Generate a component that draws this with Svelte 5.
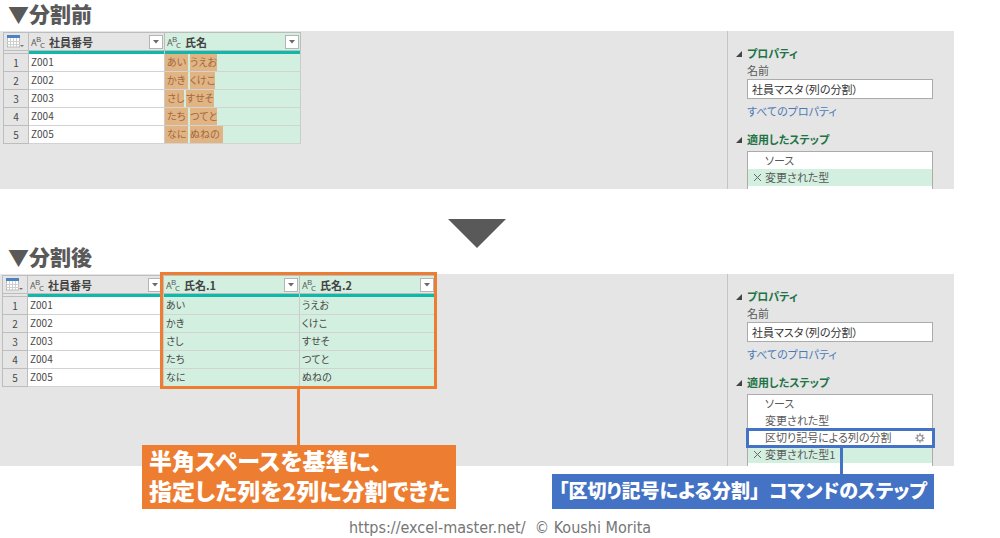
<script lang="ts">
	type Step = { label: string; active?: boolean; gear?: boolean };

	const ids = ['Z001', 'Z002', 'Z003', 'Z004', 'Z005'];
	const first = ['あい', 'かき', 'さし', 'たち', 'なに'];
	const last = ['うえお', 'くけこ', 'すせそ', 'つてと', 'ぬねの'];

	const stepsBefore: Step[] = [{ label: 'ソース' }, { label: '変更された型', active: true }];
	const stepsAfter: Step[] = [
		{ label: 'ソース' },
		{ label: '変更された型' },
		{ label: '区切り記号による列の分割', gear: true },
		{ label: '変更された型1', active: true }
	];
</script>

{#snippet corner()}
	<th class="corner" scope="col" aria-label="テーブル">
		<svg width="18" height="14" viewBox="0 0 18 14">
			<rect x="0.5" y="1" width="12" height="11" fill="#fff" stroke="#bcbcbc" />
			<path d="M3.5 3v9M6.5 3v9M9.5 3v9M0 6.5h13M0 9.5h13" stroke="#cfcfcf" fill="none" />
			<rect width="13" height="3" fill="#4a83c3" />
			<path d="M13 10h4l-2 2z" fill="#777" />
		</svg>
	</th>
{/snippet}

{#snippet column(name: string, selected: boolean)}
	<th scope="col" class:selected>
		<div class="head">
			<svg class="abc" width="14" height="14" viewBox="0 0 14 14">
				<text x="0" y="11" font-size="9">A</text>
				<text x="5" y="7" font-size="8">B</text>
				<text x="9" y="13" font-size="8">C</text>
			</svg>
			<span>{name}</span>
			<button class="filter" aria-label="{name}のフィルター">
				<svg width="6" height="4" viewBox="0 0 6 4"><path d="M0 0h6L3 3.5z" fill="#6b6b6b" /></svg>
			</button>
		</div>
	</th>
{/snippet}

{#snippet settings(id: string, steps: Step[])}
	<aside>
		<h3><svg width="6" height="6"><path d="M6 0v6H0z" fill="#444" /></svg>プロパティ</h3>
		<div class="group">
			<label for={id}>名前</label>
			<input {id} type="text" value="社員マスタ（列の分割）" />
			<a href="#all">すべてのプロパティ</a>
		</div>
		<h3><svg width="6" height="6"><path d="M6 0v6H0z" fill="#444" /></svg>適用したステップ</h3>
		<ul class="steps">
			{#each steps as step}
				<li class:active={step.active} class:marked={step.gear}>
					<svg class="remove" width="9" height="9" viewBox="0 0 9 9">
						{#if step.active}
							<path d="M1 1l7 7M8 1L1 8" stroke="#666" fill="none" />
						{/if}
					</svg>
					<span>{step.label}</span>
					{#if step.gear}
						<button class="gear" aria-label="設定">
							<svg width="10" height="10" viewBox="0 0 10 10" fill="none" stroke="#999">
								<circle cx="5" cy="5" r="2.7" stroke-width="1.3" />
								<path
									stroke-width="1.5"
									d="M5 0.3v1.9M5 7.8v1.9M0.3 5h1.9M7.8 5h1.9M1.7 1.7l1.3 1.3M7 7l1.3 1.3M8.3 1.7L7 3M3 7L1.7 8.3"
								/>
							</svg>
						</button>
					{/if}
				</li>
			{/each}
		</ul>
	</aside>
{/snippet}

<main>
	<h2>▼分割前</h2>
	<section class="panel">
		<div class="grid before">
			<table>
				<thead>
					<tr>
						{@render corner()}
						{@render column('社員番号', false)}
						{@render column('氏名', true)}
					</tr>
					<tr class="bar"><td></td><td></td><td></td></tr>
				</thead>
				<tbody>
					{#each ids as id, i}
						<tr>
							<th scope="row">{i + 1}</th>
							<td>{id}</td>
							<td class="selected names">
								<div>
									<mark class:short={first[i] === 'さし'}>{first[i]}</mark>
									<mark class="last" class:wide={last[i] === 'ぬねの'}>{last[i]}</mark>
								</div>
							</td>
						</tr>
					{/each}
				</tbody>
			</table>
		</div>
		{@render settings('name-before', stepsBefore)}
	</section>

	<svg class="arrow" width="58" height="29" viewBox="0 0 58 29">
		<path d="M0 0h58L29 29z" fill="#595959" />
	</svg>

	<h2>▼分割後</h2>
	<section class="panel">
		<div class="grid after">
			<table>
				<thead>
					<tr>
						{@render corner()}
						{@render column('社員番号', false)}
						{@render column('氏名.1', true)}
						{@render column('氏名.2', true)}
					</tr>
					<tr class="bar"><td></td><td></td><td></td><td></td></tr>
				</thead>
				<tbody>
					{#each ids as id, i}
						<tr>
							<th scope="row">{i + 1}</th>
							<td>{id}</td>
							<td class="selected">{first[i]}</td>
							<td class="selected">{last[i]}</td>
						</tr>
					{/each}
				</tbody>
			</table>
			<div class="frame"></div>
		</div>
		{@render settings('name-after', stepsAfter)}
		<p class="callout orange">半角スペースを基準に、<br />指定した列を2列に分割できた</p>
		<p class="callout blue">
			「区切り記号による分割<span class="full">」</span>コマンドのステップ
		</p>
	</section>
</main>

<footer>https://excel-master.net/&nbsp; © Koushi Morita</footer>

<style>
	:global(body) {
		margin: 0;
		background: #fff;
		font-family: 'Noto Sans CJK JP', sans-serif;
	}

	main {
		padding: 3px 46px 0 0;
	}

	h2 {
		margin: 0 0 8px 8px;
		font-size: 21px;
		line-height: 20px;
		font-weight: 900;
		color: #595959;
	}

	button {
		padding: 0;
		border: none;
		background: none;
	}

	.arrow {
		display: block;
		margin: 30px auto -2px;
	}

	.panel {
		position: relative;
		display: flex;
		justify-content: space-between;
		align-items: stretch;
		background: #e5e5e5;
	}

	.grid {
		position: relative;
		align-self: flex-start;
		padding-top: 1px;
	}

	.before {
		padding-left: 3px;
	}

	.after {
		padding-left: 2px;
	}

	/* data grid */

	table {
		border-collapse: separate;
		border-spacing: 0;
		border-left: 1px solid #bdbdbd;
		border-top: 1px solid #bdbdbd;
		font-size: 10px;
		line-height: 16px;
		color: #484848;
	}

	th,
	td {
		box-sizing: border-box;
		width: 136px;
		height: 18px;
		padding: 0 0 1px 2px;
		border-right: 1px solid #cbcbcb;
		border-bottom: 1px solid #d3d3d3;
		background: #fff;
		text-align: left;
		font-feature-settings: 'palt';
	}

	thead th {
		padding-bottom: 0;
		background: #e5e5e5;
		border-color: #bdbdbd;
		font-size: 11px;
	}

	tbody th,
	thead .corner,
	.bar td:first-child {
		width: 25px;
		padding: 0;
		background: #e5e5e5;
		border-color: #bdbdbd;
		text-align: center;
		font-weight: 400;
	}

	thead .corner {
		padding-left: 3px;
	}

	.corner svg {
		display: block;
	}

	th.selected,
	td.selected {
		background: #d3efe0;
	}

	.bar td {
		height: 3px;
		padding: 0;
		border-bottom: none;
		background: #0fb9a9;
	}

	.bar td:first-child {
		border-bottom: 1px solid #bdbdbd;
	}

	.head {
		display: flex;
		align-items: center;
		gap: 4px;
		height: 17px;
		padding-right: 1px;
		color: #444;
	}

	.abc {
		flex: none;
		fill: #555;
		font-weight: 400;
		font-family: 'Open Sans', sans-serif;
	}

	.filter {
		display: flex;
		align-items: center;
		justify-content: center;
		width: 14px;
		height: 14px;
		margin-left: auto;
		border: 1px solid #b5b5b5;
		background: #fff;
	}

	td.names {
		padding: 0;
	}

	.names div {
		display: flex;
		gap: 2px;
		height: 17px;
	}

	mark {
		box-sizing: border-box;
		width: 23px;
		padding-left: 2px;
		background: #e1b484;
		color: #a2683e;
		white-space: nowrap;
	}

	mark.short {
		width: 19px;
	}

	mark.last {
		flex: none;
		width: auto;
		min-width: 24px;
		padding-left: 0;
	}

	mark.wide {
		width: 33px;
	}

	.frame {
		position: absolute;
		top: -2px;
		right: -1px;
		bottom: -2px;
		width: 271px;
		border: 3px solid #ed7d31;
	}

	.frame::after {
		content: '';
		position: absolute;
		top: 100%;
		left: calc(50% - 2px);
		width: 3px;
		height: 60px;
		background: #ed7d31;
	}

	/* query settings */

	aside {
		box-sizing: border-box;
		width: 227px;
		padding: 14px 21px 0 8px;
		border-left: 1px solid #c4c4c4;
		font-size: 11px;
		line-height: 17px;
		color: #595959;
		font-feature-settings: 'palt';
	}

	h3 {
		display: flex;
		align-items: center;
		gap: 5px;
		margin: 0;
		font-size: 11px;
		line-height: 17px;
		color: #217346;
	}

	.group {
		display: flex;
		flex-direction: column;
		align-items: flex-start;
		padding: 0 0 11px 11px;
	}

	input {
		box-sizing: border-box;
		width: 100%;
		height: 20px;
		margin-bottom: 4px;
		padding: 0 4px;
		border: 1px solid #ababab;
		background: #fff;
		font: inherit;
		font-feature-settings: 'palt';
		color: #333;
	}

	a {
		color: #4a7ab5;
		text-decoration: none;
	}

	.steps {
		margin: 3px 0 0 11px;
		padding: 0 0 3px;
		border: 1px solid #ababab;
		border-bottom: none;
		background: #fff;
		list-style: none;
	}

	li {
		position: relative;
		display: flex;
		align-items: center;
		gap: 3px;
		height: 17px;
		padding: 0 7px 0 5px;
	}

	.active {
		background: #d3efe0;
	}

	.gear {
		display: flex;
		margin-left: auto;
	}

	.marked {
		z-index: 1;
	}

	.marked::before {
		content: '';
		position: absolute;
		inset: -1px -3px -2px -2px;
		border: 3px solid #4472c4;
	}

	.marked::after {
		content: '';
		position: absolute;
		top: 19px;
		left: 50%;
		width: 3px;
		height: 28px;
		background: #4472c4;
	}

	/* annotations */

	.callout {
		position: absolute;
		z-index: 2;
		margin: 0;
		color: #fff;
		font-weight: 900;
		white-space: nowrap;
		font-feature-settings: 'palt';
	}

	.full {
		font-feature-settings: normal;
	}

	.orange {
		top: 171px;
		left: 142px;
		padding: 0 6px 4px 7px;
		background: #ed7d31;
		font-size: 23px;
		line-height: 30px;
	}

	.blue {
		top: 200px;
		right: 20px;
		padding: 0 7px 4px;
		background: #4472c4;
		font-size: 19px;
		line-height: 31px;
	}

	footer {
		margin-top: 51px;
		text-align: center;
		font-family: 'DejaVu Sans Condensed', 'Noto Sans', sans-serif;
		font-size: 16px;
		line-height: 21px;
		color: #767676;
	}
</style>
